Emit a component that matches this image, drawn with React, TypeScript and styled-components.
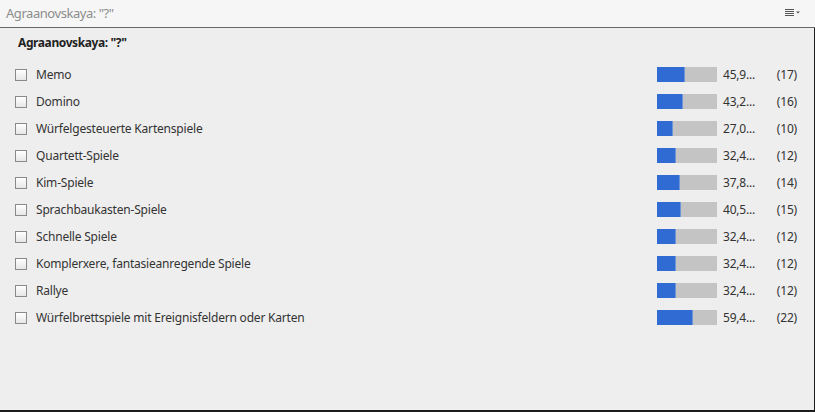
import React from 'react';
import styled, {createGlobalStyle} from 'styled-components';

const GlobalStyle = createGlobalStyle`
  html, body {
    margin: 0;
    padding: 0;
    background: #eeeeee;
  }
  body {
    font-family: 'Noto Sans', 'Open Sans', sans-serif;
  }
`;

interface Entry {
  label: string;
  percent: string;
  count: number;
}

const TOTAL = 37;

const entries: Entry[] = [
  {label: 'Memo', percent: '45,9...', count: 17},
  {label: 'Domino', percent: '43,2...', count: 16},
  {label: 'Würfelgesteuerte Kartenspiele', percent: '27,0...', count: 10},
  {label: 'Quartett-Spiele', percent: '32,4...', count: 12},
  {label: 'Kim-Spiele', percent: '37,8...', count: 14},
  {label: 'Sprachbaukasten-Spiele', percent: '40,5...', count: 15},
  {label: 'Schnelle Spiele', percent: '32,4...', count: 12},
  {label: 'Komplerxere, fantasieanregende Spiele', percent: '32,4...', count: 12},
  {label: 'Rallye', percent: '32,4...', count: 12},
  {label: 'Würfelbrettspiele mit Ereignisfeldern oder Karten', percent: '59,4...', count: 22},
];

const MenuIcon: React.FC = () => (
  <svg width="16" height="8" viewBox="0 0 16 8">
    <g fill="#555">
      <rect x="0" y="0" width="9" height="1" />
      <rect x="0" y="2" width="9" height="1" />
      <rect x="0" y="4" width="9" height="1" />
      <rect x="0" y="6" width="9" height="1" />
      <path d="M11 2.5 L15 2.5 L13 4.5 Z" />
    </g>
  </svg>
);

const App: React.FC = () => {
  return (
    <>
      <GlobalStyle />
      <StyledPanel>
        <StyledHeader>
          <StyledHeaderTitle>Agraanovskaya: "?"</StyledHeaderTitle>
          <StyledMenuButton>
            <MenuIcon />
          </StyledMenuButton>
        </StyledHeader>
        <StyledBody>
          <StyledQuestion>Agraanovskaya: "?"</StyledQuestion>
          <StyledList>
            {entries.map((entry) => (
              <StyledRow key={entry.label}>
                <StyledCheckbox />
                <StyledLabel>{entry.label}</StyledLabel>
                <StyledBar>
                  <StyledBarFill style={{width: `${(entry.count / TOTAL) * 100}%`}} />
                </StyledBar>
                <StyledPercent>{entry.percent}</StyledPercent>
                <StyledCount>({entry.count})</StyledCount>
              </StyledRow>
            ))}
          </StyledList>
        </StyledBody>
      </StyledPanel>
    </>
  );
};

const StyledPanel = styled.div`
  display: flex;
  flex-direction: column;
  width: 815px;
  height: 412px;
  box-sizing: border-box;
  border-bottom: 2px solid #1c1c1c;
`;

const StyledHeader = styled.div`
  display: flex;
  align-items: center;
  justify-content: space-between;
  height: 28px;
  box-sizing: border-box;
  padding: 0 14px 2px 6px;
  background: #f6f6f6;
  border-bottom: 1px solid #686868;
`;

const StyledHeaderTitle = styled.div`
  font-size: 13px;
  letter-spacing: -0.45px;
  color: #8c8c8c;
`;

const StyledMenuButton = styled.div`
  display: flex;
  align-items: center;
  height: 16px;
`;

const StyledBody = styled.div`
  flex: 1;
  display: flex;
  flex-direction: column;
  padding: 7px 0 0 0;
  border-right: 1px solid #1c1c1c;
`;

const StyledQuestion = styled.div`
  padding-left: 18px;
  font-size: 12px;
  font-weight: 700;
  letter-spacing: -0.4px;
  line-height: 16px;
  color: #222;
`;

const StyledList = styled.div`
  display: flex;
  flex-direction: column;
  margin-top: 10px;
`;

const StyledRow = styled.div`
  display: grid;
  grid-template-columns: 12px 1fr 60px 54px 26px;
  align-items: center;
  height: 27px;
  padding: 0 17px 0 15px;
  font-size: 12px;
  letter-spacing: -0.2px;
  color: #333;
`;

const StyledCheckbox = styled.div`
  width: 12px;
  height: 12px;
  box-sizing: border-box;
  border: 1px solid #8a8a8a;
  background: linear-gradient(#ffffff, #e6e6e6);
`;

const StyledLabel = styled.span`
  white-space: nowrap;
  padding-left: 9px;
`;

const StyledBar = styled.div`
  height: 15px;
  background: #c4c4c4;
`;

const StyledBarFill = styled.div`
  height: 100%;
  background: #2f6bd2;
  border-right: 1px solid #6d95da;
  box-sizing: border-box;
`;

const StyledPercent = styled.span`
  white-space: nowrap;
  padding-left: 6px;
`;

const StyledCount = styled.span`
  text-align: right;
  white-space: nowrap;
`;

export default App;
